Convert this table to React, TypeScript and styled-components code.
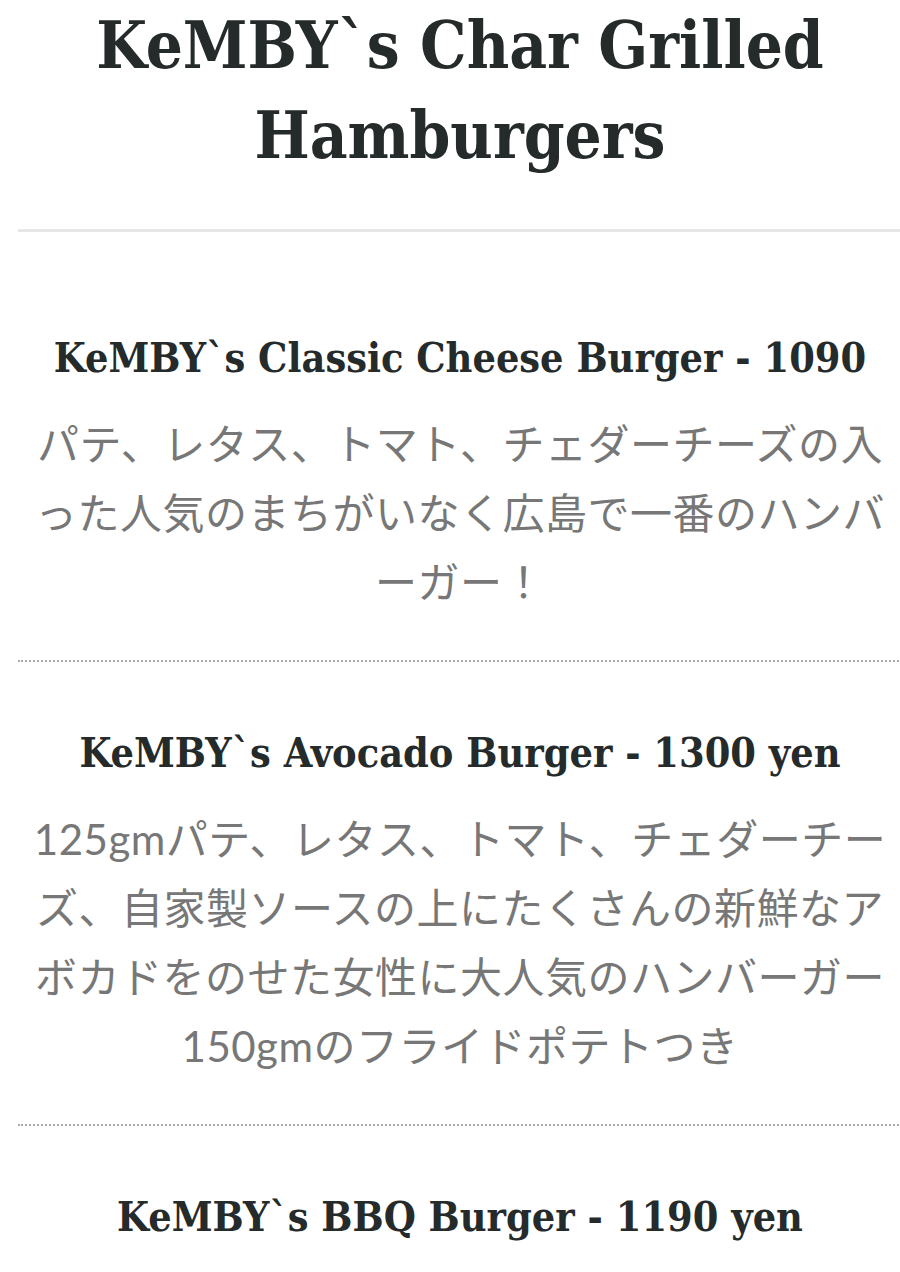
import React from "react";
import styled, { createGlobalStyle } from "styled-components";

const GlobalStyle = createGlobalStyle`
  html, body {
    margin: 0;
    padding: 0;
    background: #ffffff;
    overflow-x: hidden;
  }
`;

const Page = styled.main`
  width: 884px;
  margin-left: 18px;
  display: flex;
  flex-direction: column;
`;

const Title = styled.h1`
  margin: 0;
  padding-bottom: 49px;
  font-family: "DejaVu Serif Condensed", "DejaVu Serif", serif;
  font-stretch: condensed;
  font-weight: 700;
  font-size: 65px;
  line-height: 90px;
  color: #252a2b;
  text-align: center;
`;

const Rule = styled.hr`
  margin: 0;
  border: none;
  border-top: 3px solid #e6e6e6;
`;

const Menu = styled.section`
  display: flex;
  flex-direction: column;
  padding-top: 100px;
`;

const Item = styled.article<{ $last?: boolean }>`
  display: flex;
  flex-direction: column;
  align-items: center;
  padding-bottom: ${(p) => (p.$last ? "0" : "43px")};
  margin-bottom: ${(p) => (p.$last ? "0" : "65px")};
  border-bottom: ${(p) => (p.$last ? "none" : "2px dotted #aaaaaa")};
`;

const ItemName = styled.h2`
  margin: 0 0 26px;
  font-family: "DejaVu Serif Condensed", "DejaVu Serif", serif;
  font-stretch: condensed;
  font-weight: 700;
  font-size: 41px;
  line-height: 52px;
  color: #252a2b;
  text-align: center;
`;

const Description = styled.p`
  margin: 0;
  font-family: Lato, "Noto Sans CJK JP", sans-serif;
  font-weight: 400;
  font-size: 42px;
  letter-spacing: 0.5px;
  line-height: 69px;
  color: #777777;
  text-align: center;
  padding: 0 12px;
`;

const items = [
  {
    name: "KeMBY`s Classic Cheese Burger - 1090",
    desc: "パテ、レタス、トマト、チェダーチーズの入った人気のまちがいなく広島で一番のハンバーガー！",
  },
  {
    name: "KeMBY`s Avocado Burger - 1300 yen",
    desc: "125gmパテ、レタス、トマト、チェダーチーズ、自家製ソースの上にたくさんの新鮮なアボカドをのせた女性に大人気のハンバーガー150gmのフライドポテトつき",
  },
  {
    name: "KeMBY`s BBQ Burger - 1190 yen",
    desc: "",
  },
];

export default function App() {
  return (
    <>
      <GlobalStyle />
      <Page>
        <Title>KeMBY`s Char Grilled Hamburgers</Title>
        <Rule />
        <Menu>
          {items.map((it, i) => (
            <Item key={it.name} $last={i === items.length - 1}>
              <ItemName>{it.name}</ItemName>
              {it.desc && <Description>{it.desc}</Description>}
            </Item>
          ))}
        </Menu>
      </Page>
    </>
  );
}
